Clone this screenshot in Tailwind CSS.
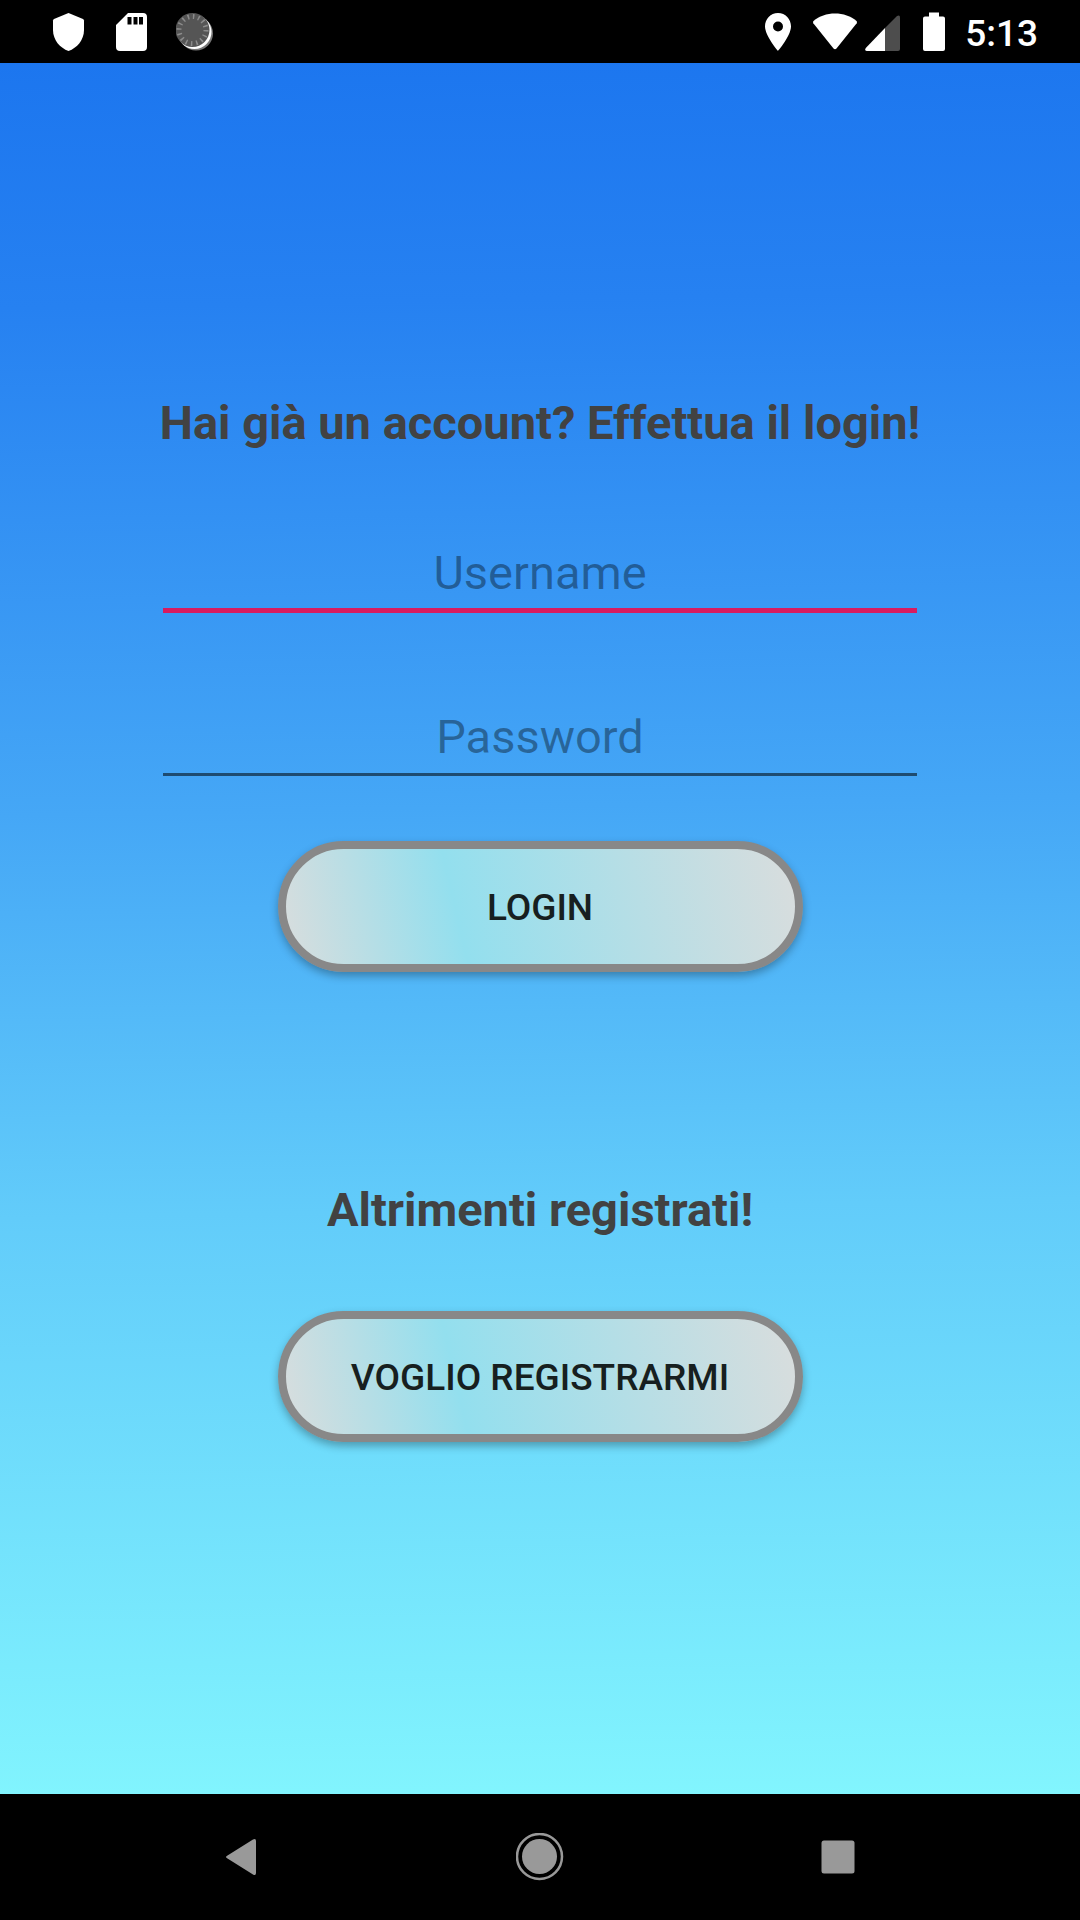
<!DOCTYPE html>
<html lang="it">
<head>
<meta charset="utf-8">
<meta name="viewport" content="width=device-width, initial-scale=1">
<title>Login</title>
<script src="https://cdn.jsdelivr.net/npm/@tailwindcss/browser@4"></script>
</head>
<body class="flex min-h-screen flex-col bg-black font-['Roboto',sans-serif]">
<header class="flex h-[63px] shrink-0 items-center justify-between pr-[42px] pl-12">
  <div class="flex items-center gap-6">
    <svg class="size-10" viewBox="0 0 40 40" fill="#fff" role="img" aria-label="Protezione"><path d="M20.500 1 L35 7 Q36 7.500 36 8.500 V18 C36 28 29 36 20.500 39 C12 36 5 28 5 18 V8.500 Q5 7.500 6 7 Z"/></svg>
    <svg class="size-10" viewBox="0 0 40 40" fill="#fff" fill-rule="evenodd" role="img" aria-label="Scheda SD"><path d="M16 1 H31 Q35 1 35 5 V35 Q35 39 31 39 H8 Q4 39 4 35 V13 Z M15.500 5 V12.500 H19.500 V5 Z M21.500 5 V12.500 H25.500 V5 Z M27 5 V12.500 H31 V5 Z"/></svg>
    <svg class="size-10" viewBox="0 0 40 40" role="img" aria-label="Sincronizzazione">
      <circle cx="20" cy="21.500" r="17" fill="#777"/>
      <circle cx="18.500" cy="20" r="17" fill="#fff"/>
      <circle cx="16.500" cy="18" r="17" fill="#555"/>
      <circle cx="16.500" cy="18" r="13.500" fill="none" stroke="#8c8c8c" stroke-width="5" stroke-dasharray="1.500 3.801"/>
    </svg>
  </div>
  <div class="flex items-center">
    <svg class="h-10 w-7" viewBox="0 0 28 40" fill="#fff" fill-rule="evenodd" role="img" aria-label="Posizione"><path d="M14 1 C6.500 1 1 7 1 14.300 C1 24 14 39 14 39 S27 24 27 14.300 C27 7 21.500 1 14 1 Z M14 9.500 A5 5 0 1 1 14 19.500 A5 5 0 1 1 14 9.500 Z"/></svg>
    <svg class="ml-5 h-10 w-[46px]" viewBox="0 0 46 40" fill="#fff" role="img" aria-label="Wi-Fi"><path d="M1.500 9 C7 4 15 1.500 23 1.500 S39 4 44.500 9 Q45.500 10 44.700 11.200 L24.500 36.500 Q23 38 21.500 36.500 L1.300 11.200 Q.500 10 1.500 9 Z"/></svg>
    <svg class="ml-[6px] h-10 w-9" viewBox="0 0 36 40" role="img" aria-label="Segnale"><path d="M21 16 L33 4 Q36 2.500 36 5.500 V37 Q36 39 34 39 H21 Z" fill="#4d4d4d"/><path d="M21 16 V39 H3 Q0 38.500 1.800 36 Z" fill="#fff"/></svg>
    <svg class="ml-[23px] h-10 w-[22px]" viewBox="0 0 22 40" fill="#fff" role="img" aria-label="Batteria"><path d="M6 .500 H16 V4.500 H20 Q22 4.500 22 6.500 V37 Q22 39 20 39 H2 Q0 39 0 37 V6.500 Q0 4.500 2 4.500 H6 Z"/></svg>
    <time class="ml-5 pt-1 text-[37px] leading-[44px] font-medium text-white">5:13</time>
  </div>
</header>
<main class="flex grow flex-col items-center bg-linear-[179deg,#1c76ef,#2681f1_14%,#45a7f6_43%,#62ccfa_66%,#82f5fe] px-[163px] pt-[332px]">
  <form class="flex w-full flex-col items-center">
    <h1 class="text-[47px] leading-[56px] font-bold whitespace-nowrap text-[#424242]">Hai già un account? Effettua il login!</h1>
    <input aria-label="Username" placeholder="Username" class="mt-[84px] h-[78px] w-full border-b-5 border-[#d81b60] pt-[2px] text-center text-[47px] outline-none placeholder:text-black/38">
    <input aria-label="Password" type="password" placeholder="Password" class="mt-[85px] h-[78px] w-full border-b-3 border-black/54 pt-[2px] text-center text-[47px] outline-none placeholder:text-black/38">
    <button type="button" class="mt-[65px] h-[131px] w-[525px] rounded-full border-8 border-[#888] bg-linear-[77deg,#d9dddd,#93dfee_34%,#d9dddd] pt-[2px] text-[37px] font-medium text-[#171f20] shadow-[0_4px_8px_rgba(0,0,0,0.3)]">LOGIN</button>
  </form>
  <h2 class="mt-[210px] text-[47px] leading-[56px] font-bold text-[#424242]">Altrimenti registrati!</h2>
  <button type="button" class="mt-[73px] h-[131px] w-[525px] rounded-full border-8 border-[#888] bg-linear-[77deg,#d9dddd,#93dfee_34%,#d9dddd] pt-[2px] text-[37px] font-medium text-[#171f20] shadow-[0_4px_8px_rgba(0,0,0,0.3)]">VOGLIO REGISTRARMI</button>
</main>
<nav class="flex h-[126px] shrink-0 items-center justify-center gap-[250px]" aria-label="Navigazione di sistema">
  <button type="button" aria-label="Indietro"><svg class="size-12" viewBox="0 0 48 48"><path d="M9.500 22.500 L35 6.500 Q38 5 38 8 V40 Q38 43 35 41.500 L9.500 25.500 Q6.500 24 9.500 22.500 Z" fill="#999"/></svg></button>
  <button type="button" aria-label="Home"><svg class="size-12" viewBox="0 0 48 48"><circle cx="23.500" cy="23.500" r="22.500" fill="none" stroke="#999" stroke-width="2.500"/><circle cx="23.500" cy="23.500" r="17.500" fill="#999"/></svg></button>
  <button type="button" aria-label="Recenti"><svg class="size-12" viewBox="0 0 48 48"><rect x="7.500" y="7.500" width="33" height="33" rx="2.500" fill="#999"/></svg></button>
</nav>
</body>
</html>
